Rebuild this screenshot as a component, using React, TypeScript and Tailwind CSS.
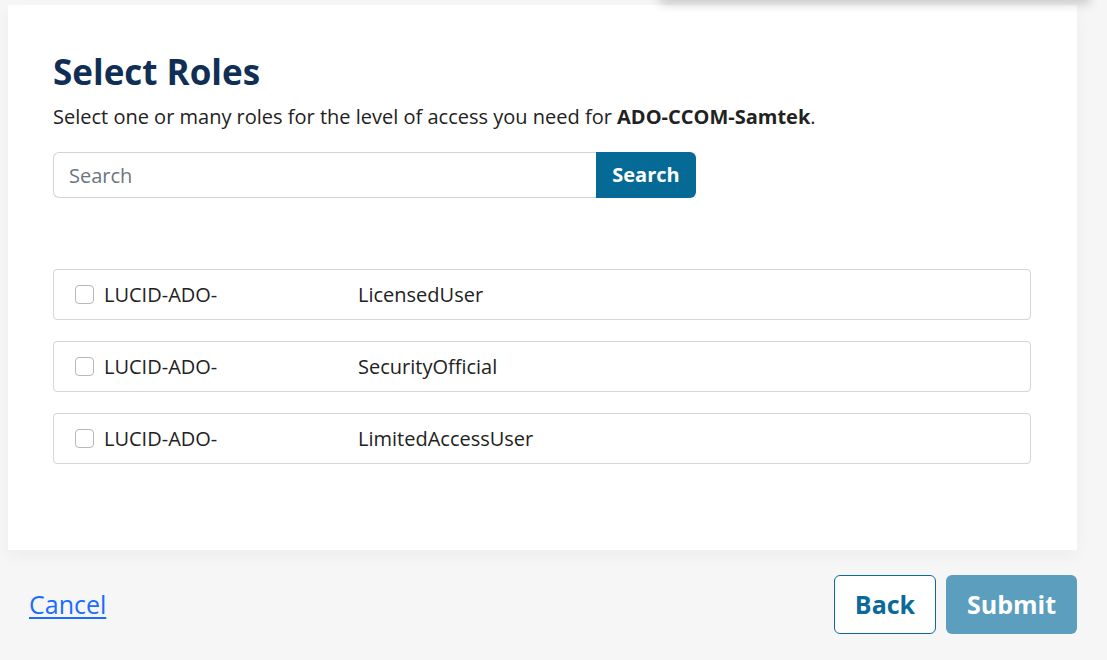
import React from 'react'

const roles = [
  { group: 'LUCID-ADO-', name: 'LicensedUser' },
  { group: 'LUCID-ADO-', name: 'SecurityOfficial' },
  { group: 'LUCID-ADO-', name: 'LimitedAccessUser' },
]

export default function App() {
  return (
    <div
      className="relative min-h-[660px] overflow-hidden bg-[#f6f6f6] text-[#222]"
      style={{ fontFamily: '"Open Sans", "Noto Sans", sans-serif' }}
    >
      {/* shadow from the menu above the viewport */}
      <div className="absolute left-[660px] top-[-40px] h-[40px] w-[430px] bg-white shadow-[0_4px_10px_rgba(0,0,0,0.18)]" />

      {/* Roles panel */}
      <div className="ml-2 mt-[5px] w-[1069px] bg-white px-[45px] pt-[47px] pb-[86px] shadow-[0_6px_16px_rgba(0,0,0,0.04)]">
        <h1 className="text-[35px] font-bold leading-10 text-[#112f55]">Select Roles</h1>
        <p className="mt-[11px] text-[20px] leading-7 text-[#222]">
          Select one or many roles for the level of access you need for{' '}
          <span className="font-bold">ADO-CCOM-Samtek</span>.
        </p>

        {/* Search */}
        <div className="mt-[21px] flex h-[46px] w-[643px]">
          <input
            placeholder="Search"
            className="h-full w-[543px] rounded-l-[6px] border border-r-0 border-[#d0d4da] px-[15px] text-[20px] text-[#222] placeholder:text-[#6c757d] outline-none"
          />
          <button className="h-full w-[100px] rounded-r-[6px] bg-[#066a97] text-[20px] font-bold text-white">
            Search
          </button>
        </div>

        {/* Role list */}
        <div className="mt-[71px] flex w-[978px] flex-col gap-[21px]">
          {roles.map((r) => (
            <label
              key={r.name}
              className="flex h-[51px] items-center rounded-[4px] border border-[#d3d6db] pl-[21px] text-[20px] text-[#222]"
            >
              <span className="h-[19px] w-[19px] shrink-0 rounded-[4px] border border-[#b8b8b8] bg-white" />
              <span className="ml-[10px] w-[254px] shrink-0 overflow-hidden whitespace-nowrap">{r.group}</span>
              <span>{r.name}</span>
            </label>
          ))}
        </div>
      </div>

      {/* Footer actions */}
      <div className="flex items-center justify-between pl-[29px] pr-[30px] pt-[25px]">
        <a href="#" className="text-[25px] text-[#1a6cff] underline underline-offset-[3px]">
          Cancel
        </a>
        <div className="flex gap-[10px]">
          <button className="h-[59px] w-[102px] rounded-[6px] border border-[#0b6a97] bg-white text-[25px] font-bold text-[#0b6a97]">
            Back
          </button>
          <button className="h-[59px] w-[131px] rounded-[6px] bg-[#5c9ebd] text-[25px] font-bold text-white">
            Submit
          </button>
        </div>
      </div>
    </div>
  )
}
